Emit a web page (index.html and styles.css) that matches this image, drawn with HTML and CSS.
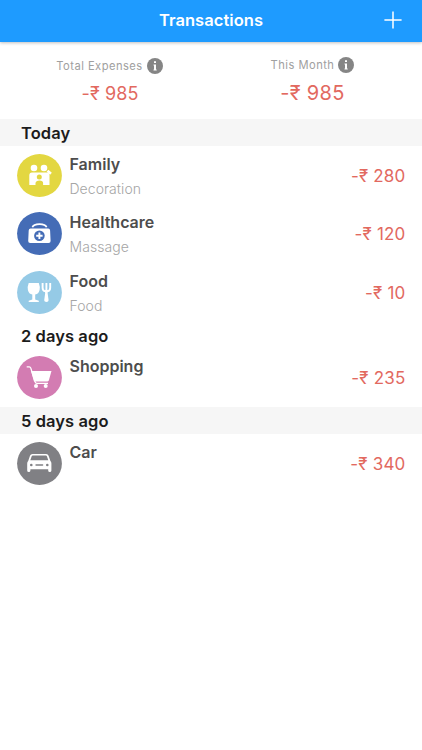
FILE: index.html
```html
<!DOCTYPE html>
<html lang="en">
<head>
<meta charset="utf-8">
<title>Transactions</title>
<link rel="stylesheet" href="styles.css">
</head>
<body>
<header class="bar">
  <h1>Transactions</h1>
  <svg class="add" viewBox="0 0 18 18"><path d="M9 .6v16.8M.4 9h17.2" stroke="#fff" stroke-width="1.5"/></svg>
</header>
<section class="summary">
  <div class="total">
    <div class="label"><span>Total Expenses</span><svg class="info" viewBox="0 0 16 16"><circle cx="8" cy="8" r="8" fill="#858585"/><path d="M7 3.3h2v1.8H7zM6.500 6.400H9v5h.7v1.200H6.500v-1.200H7V7.600h-.5z" fill="#fff"/></svg></div>
    <div class="sum">-₹ 985</div>
  </div>
  <div class="month">
    <div class="label"><span>This Month</span><svg class="info" viewBox="0 0 16 16"><circle cx="8" cy="8" r="8" fill="#858585"/><path d="M7 3.3h2v1.8H7zM6.500 6.400H9v5h.7v1.200H6.500v-1.200H7V7.600h-.5z" fill="#fff"/></svg></div>
    <div class="sum">-₹ 985</div>
  </div>
</section>
<main>
  <h2 class="shaded">Today</h2>
  <article class="row">
    <svg class="icon" viewBox="0 0 45 43" fill="#fff"><ellipse cx="22.5" cy="21.5" rx="22.4" ry="21.5" fill="#e3d741"/><circle cx="17" cy="14" r="3.3"/><circle cx="27" cy="14" r="3.3"/><path d="M15 18.5h15.5q2 0 2 2.500V31h-6.400v-2q0-2.500-3.600-2.500T18.500 29v2H12.300V21.500q0-3 2.700-3z"/><path d="m30.500 16.700 3.500 3" stroke="#fff" stroke-width="2.600"/><circle cx="22.300" cy="23" r="2.500" fill="#e3d741"/></svg>
    <div class="text"><h3>Family</h3><p>Decoration</p></div>
    <div class="amount">-₹ 280</div>
  </article>
  <article class="row">
    <svg class="icon" viewBox="0 0 45 43" fill="#fff"><ellipse cx="22.5" cy="21.5" rx="22.4" ry="21.5" fill="#446cb6"/><path d="M15.400 15.200c1.500-4.200 12.700-4.200 14.200 0" fill="none" stroke="#fff" stroke-width="1.700"/><path d="M13.600 16.600h17.600q1.800 0 1.900 2l.5 10.300q0 2.100-2 2.100H13.200q-2 0-2-2.100l.5-10.300q.1-2 1.900-2z"/><circle cx="22.400" cy="23.700" r="5.300" fill="#446cb6"/><path d="M22.400 20.500v6.400M19.200 23.700h6.400" stroke="#fff" stroke-width="1.900"/></svg>
    <div class="text"><h3>Healthcare</h3><p>Massage</p></div>
    <div class="amount">-₹ 120</div>
  </article>
  <article class="row">
    <svg class="icon" viewBox="0 0 45 43" fill="#fff"><ellipse cx="22.5" cy="21.5" rx="22.4" ry="21.5" fill="#95cae6"/><path d="M11.700 12h10.100q1.500 3.800.8 7-.9 4-4.400 4.600v4.900l3.600 1.300V31H11.700v-1.200l3.600-1.300v-4.900q-3.500-.6-4.400-4.600-.7-3.200.8-7z"/><path d="M25.600 12.100v4.500q0 3 2 3.500h3.600q2-.5 2-3.500v-4.500M29.400 12.100V21" fill="none" stroke="#fff" stroke-width="1.900"/><path d="M27.500 19h3.800l-.7 3 1 7.200q0 1.800-2.200 1.800t-2.200-1.800l1-7.200z"/></svg>
    <div class="text"><h3>Food</h3><p>Food</p></div>
    <div class="amount">-₹ 10</div>
  </article>
  <h2>2 days ago</h2>
  <article class="row">
    <svg class="icon" viewBox="0 0 45 43" fill="#fff"><ellipse cx="22.5" cy="21.5" rx="22.4" ry="21.5" fill="#d37cb2"/><path d="M14 14.900h20.500l-2.700 9.600q-.4 1.100-1.800 1.100H17z"/><path d="M9.700 10.900h2.500q1.200 0 1.600 1.200l4.400 14q.4 1.200 1.700 1.200H31" fill="none" stroke="#fff" stroke-width="1.300"/><circle cx="19" cy="30.100" r="2"/><circle cx="28.700" cy="30.100" r="2"/></svg>
    <div class="text"><h3>Shopping</h3></div>
    <div class="amount">-₹ 235</div>
  </article>
  <h2 class="shaded">5 days ago</h2>
  <article class="row">
    <svg class="icon" viewBox="0 0 45 43" fill="#fff"><ellipse cx="22.500" cy="21.500" rx="22.400" ry="21.500" fill="#808084"/><path d="M15.500 12h13.600q1.900 0 2.500 1.700l1.800 5.200q1 .8 1 2.600v7.100q0 1.500-1.600 1.500t-1.600-1.500v-1.400H13.400v1.400q0 1.500-1.600 1.500t-1.600-1.500v-7.100q0-1.800 1-2.600l1.800-5.200q.6-1.700 2.500-1.700z"/><path d="M15.700 13.500h13.200q.7 0 1 .8l1.400 4H13.300l1.400-4q.3-.8 1-.8z" fill="#808084"/><g fill="#808084"><circle cx="14.300" cy="23" r="1.300"/><circle cx="30.300" cy="23" r="1.300"/><rect x="18.300" y="22.300" width="8" height="1.400" rx=".7"/></g></svg>
    <div class="text"><h3>Car</h3></div>
    <div class="amount">-₹ 340</div>
  </article>
</main>
</body>
</html>
```
FILE: styles.css
```css
* { box-sizing: border-box; }
body {
  margin: 0;
  min-height: 750px;
  background: #fff;
  font-family: Inter, "Liberation Sans", sans-serif;
}
h1, h2, h3, p { margin: 0; }
.bar {
  display: grid;
  grid-template-columns: 1fr auto 1fr;
  align-items: center;
  height: 41.5px;
  padding: 0 20px 1px;
  background: #1e9bff;
  box-shadow: 0 1px 3px rgba(0, 0, 0, .25);
}
.bar h1 {
  grid-column: 2;
  color: #fff;
  font-size: 16.5px;
  line-height: 20px;
  font-weight: 600;
  letter-spacing: .05px;
}
.add { justify-self: end; width: 18px; height: 18px; }
.summary {
  display: grid;
  grid-template-columns: 1fr 1fr;
  height: 77.5px;
  text-align: center;
}
.total { padding: 16px 0 0 9px; }
.month { padding: 15px 8px 0 0; }
.label {
  display: flex;
  justify-content: center;
  align-items: center;
  gap: 4px;
  height: 17px;
  color: #a0a0a0;
  font-size: 11.2px;
  letter-spacing: .45px;
}
.total .label { padding-right: 1px; }
.info { width: 16px; height: 16px; }
.sum { color: #e2695f; font-size: 18px; line-height: 22px; margin-top: 8px; letter-spacing: .1px; }
.month .sum { font-size: 20px; letter-spacing: .3px; }
h2 {
  height: 27px;
  padding-left: 21px;
  color: #1c1c1c;
  font-size: 16.5px;
  line-height: 28px;
  font-weight: 600;
  letter-spacing: .07px;
}
.shaded { background: #f6f6f6; }
.row {
  display: flex;
  height: 58.5px;
  padding: 7.5px 16.5px 0 16.5px;
}
.icon { width: 45px; height: 43px; flex: none; }
.text { flex: 1; padding-left: 8px; }
h3 { color: #4d4d4d; font-size: 16px; line-height: 20px; font-weight: 600; }
.text p { color: #a5a5a5; font-size: 14px; line-height: 18px; margin-top: 6px; font-weight: 300; letter-spacing: .05px; }
.amount { color: #e2695f; font-size: 17px; line-height: 44px; letter-spacing: .2px; }
```
